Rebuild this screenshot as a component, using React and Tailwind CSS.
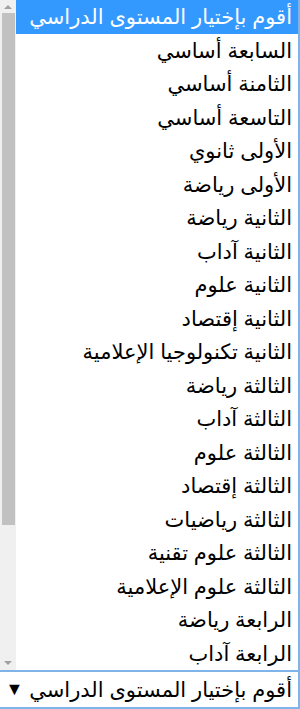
const levels = [
  'أقوم بإختيار المستوى الدراسي',
  'السابعة أساسي',
  'الثامنة أساسي',
  'التاسعة أساسي',
  'الأولى ثانوي',
  'الأولى رياضة',
  'الثانية رياضة',
  'الثانية آداب',
  'الثانية علوم',
  'الثانية إقتصاد',
  'الثانية تكنولوجيا الإعلامية',
  'الثالثة رياضة',
  'الثالثة آداب',
  'الثالثة علوم',
  'الثالثة إقتصاد',
  'الثالثة رياضيات',
  'الثالثة علوم تقنية',
  'الثالثة علوم الإعلامية',
  'الرابعة رياضة',
  'الرابعة آداب'
];

function Scrollbar() {
  return (
    <div className="w-[16px] h-full bg-[#f0f0f0] flex flex-col items-center">
      <div className="h-[13px] flex items-center justify-center">
        <div className="w-0 h-0 border-l-[4px] border-r-[4px] border-b-[4px] border-l-transparent border-r-transparent border-b-[#a0a0a0]" />
      </div>
      <div className="w-[13px] h-[512px] bg-[#c1c1c1]" />
      <div className="flex-1" />
      <div className="h-[15px] flex items-center justify-center">
        <div className="w-0 h-0 border-l-[4px] border-r-[4px] border-t-[4px] border-l-transparent border-r-transparent border-t-[#a0a0a0]" />
      </div>
    </div>
  );
}

export default function App() {
  return (
    <div className="w-[300px] h-[709px] bg-white flex flex-col font-['Liberation_Sans','DejaVu_Sans',Arial,sans-serif] text-[21px] text-black">
      <div className="h-[670px] flex border-r-[2px] border-[#7eb4ea]">
        <Scrollbar />
        <div dir="rtl" className="flex-1 flex flex-col">
          {levels.map((l, i) => (
            <div
              key={i}
              className={
                i === 0
                  ? 'h-[33.5px] flex items-center pr-[6px] bg-[#3399ff] text-white whitespace-nowrap'
                  : 'h-[33.5px] flex items-center pr-[6px] whitespace-nowrap'
              }
            >
              {l}
            </div>
          ))}
        </div>
      </div>
      <div className="flex-1 border-t-[2px] border-b-[2px] border-r-[2px] border-[#7eb4ea] flex items-center whitespace-nowrap" dir="rtl">
        <span className="pr-[6px]">{levels[0]}</span>
        <span className="mr-[6px] text-[18px]">▼</span>
      </div>
    </div>
  );
}
